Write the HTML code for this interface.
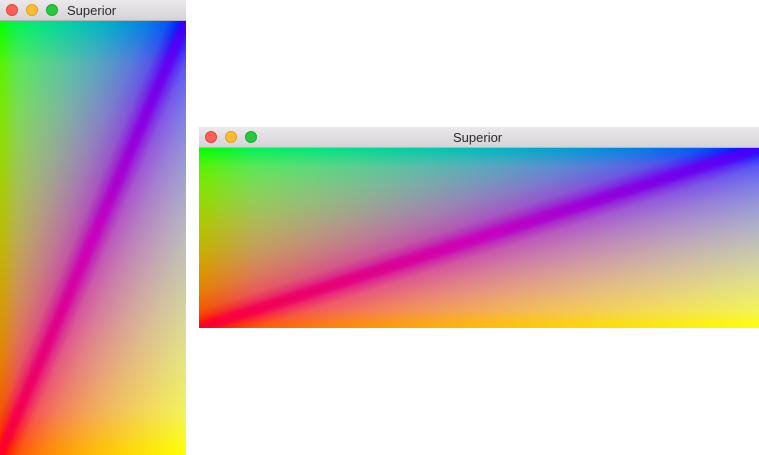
<!DOCTYPE html>
<html><head><style>
body{margin:0;width:759px;height:455px;background:#fff;position:relative;overflow:hidden;font-family:"Liberation Sans",sans-serif}
.win{position:absolute}
.tb{position:absolute;left:0;right:0;top:0;background:linear-gradient(#ebe9eb,#d5d3d5);border-bottom:1px solid #b4b4b4;box-sizing:border-box}
.dot{position:absolute;width:12px;height:12px;border-radius:50%;top:4px}
.r{background:#fc5f57;border:0.5px solid #e2463f;box-sizing:border-box}
.y{background:#fdbc2e;border:0.5px solid #e0a028;box-sizing:border-box}
.g{background:#28c840;border:0.5px solid #1eaa30;box-sizing:border-box}
.t{position:absolute;top:3px;font-size:13px;color:#2b2b2b}
svg.c{position:absolute;left:0;display:block}
.scr{mix-blend-mode:screen}
</style></head><body>
<svg width="0" height="0" style="position:absolute">
<defs>
<linearGradient id="wg" gradientUnits="userSpaceOnUse" x1="0" y1="0" x2="50" y2="50">
<stop offset="0" stop-color="rgb(0,255,0)"/><stop offset=".1" stop-color="rgb(0,243,0)"/><stop offset=".2" stop-color="rgb(0,231,0)"/><stop offset=".3" stop-color="rgb(0,218,0)"/><stop offset=".4" stop-color="rgb(0,203,0)"/><stop offset=".5" stop-color="rgb(0,188,0)"/><stop offset=".6" stop-color="rgb(0,170,0)"/><stop offset=".7" stop-color="rgb(0,149,0)"/><stop offset=".8" stop-color="rgb(0,124,0)"/><stop offset=".9" stop-color="rgb(0,89,0)"/><stop offset="1" stop-color="rgb(0,0,0)"/></linearGradient>
<linearGradient id="wr" gradientUnits="userSpaceOnUse" x1="0" y1="0" x2="0" y2="100">
<stop offset="0" stop-color="rgb(0,0,0)"/><stop offset=".1" stop-color="rgb(89,0,0)"/><stop offset=".2" stop-color="rgb(124,0,0)"/><stop offset=".3" stop-color="rgb(149,0,0)"/><stop offset=".4" stop-color="rgb(170,0,0)"/><stop offset=".5" stop-color="rgb(188,0,0)"/><stop offset=".6" stop-color="rgb(203,0,0)"/><stop offset=".7" stop-color="rgb(218,0,0)"/><stop offset=".8" stop-color="rgb(231,0,0)"/><stop offset=".9" stop-color="rgb(243,0,0)"/><stop offset="1" stop-color="rgb(255,0,0)"/></linearGradient>
<linearGradient id="wb" gradientUnits="userSpaceOnUse" x1="0" y1="0" x2="100" y2="0">
<stop offset="0" stop-color="rgb(0,0,0)"/><stop offset=".1" stop-color="rgb(0,0,89)"/><stop offset=".2" stop-color="rgb(0,0,124)"/><stop offset=".3" stop-color="rgb(0,0,149)"/><stop offset=".4" stop-color="rgb(0,0,170)"/><stop offset=".5" stop-color="rgb(0,0,188)"/><stop offset=".6" stop-color="rgb(0,0,203)"/><stop offset=".7" stop-color="rgb(0,0,218)"/><stop offset=".8" stop-color="rgb(0,0,231)"/><stop offset=".9" stop-color="rgb(0,0,243)"/><stop offset="1" stop-color="rgb(0,0,255)"/></linearGradient>
<linearGradient id="br" gradientUnits="userSpaceOnUse" x1="0" y1="0" x2="0" y2="100">
<stop offset="0" stop-color="rgb(0,0,255)"/><stop offset=".1" stop-color="rgb(89,0,243)"/><stop offset=".2" stop-color="rgb(124,0,231)"/><stop offset=".3" stop-color="rgb(149,0,218)"/><stop offset=".4" stop-color="rgb(170,0,203)"/><stop offset=".5" stop-color="rgb(188,0,188)"/><stop offset=".6" stop-color="rgb(203,0,170)"/><stop offset=".7" stop-color="rgb(218,0,149)"/><stop offset=".8" stop-color="rgb(231,0,124)"/><stop offset=".9" stop-color="rgb(243,0,89)"/><stop offset="1" stop-color="rgb(255,0,0)"/></linearGradient>
<linearGradient id="wy" gradientUnits="userSpaceOnUse" x1="50" y1="50" x2="100" y2="100">
<stop offset="0" stop-color="rgb(0,0,0)"/><stop offset=".1" stop-color="rgb(0,89,0)"/><stop offset=".2" stop-color="rgb(0,124,0)"/><stop offset=".3" stop-color="rgb(0,149,0)"/><stop offset=".4" stop-color="rgb(0,170,0)"/><stop offset=".5" stop-color="rgb(0,188,0)"/><stop offset=".6" stop-color="rgb(0,203,0)"/><stop offset=".7" stop-color="rgb(0,218,0)"/><stop offset=".8" stop-color="rgb(0,231,0)"/><stop offset=".9" stop-color="rgb(0,243,0)"/><stop offset="1" stop-color="rgb(0,255,0)"/></linearGradient>
<filter id="bl" x="-20%" y="-20%" width="140%" height="140%"><feGaussianBlur stdDeviation="1.5"/></filter>
</defs></svg>

<div class="win" style="left:0;top:0;width:186px;height:455px">
<div class="tb" style="height:21px"></div>
<div class="dot r" style="left:6px"></div><div class="dot y" style="left:26px"></div><div class="dot g" style="left:46px"></div>
<div class="t" style="left:67px">Superior</div>
<svg class="c" style="top:21px" width="186" height="434" viewBox="0 0 100 100" preserveAspectRatio="none">
<g style="isolation:isolate">
<polygon points="0,0 100,0 0,100" fill="url(#wg)"/>
<polygon class="scr" points="0,0 100,0 0,100" fill="url(#wr)"/>
<polygon class="scr" points="0,0 100,0 0,100" fill="url(#wb)"/>
</g>
<g style="isolation:isolate">
<polygon points="100,0 100,100 0,100" fill="url(#br)"/>
<polygon class="scr" points="100,0 100,100 0,100" fill="url(#wy)"/>
</g>
</svg>
<svg class="c" style="top:21px" width="186" height="434">
<defs><linearGradient id="ln1" gradientUnits="userSpaceOnUse" x1="0" y1="434" x2="186" y2="0"><stop offset="0" stop-color="#ff0030"/><stop offset=".5" stop-color="#d000c0"/><stop offset="1" stop-color="#5000ff"/></linearGradient></defs>
<line x1="-5" y1="445" x2="191" y2="-11" stroke="url(#ln1)" stroke-width="9" opacity="0.75" filter="url(#bl)"/>
</svg>
</div>

<div class="win" style="left:199px;top:127px;width:560px;height:201px">
<div class="tb" style="height:21px"></div>
<div class="dot r" style="left:6px"></div><div class="dot y" style="left:26px"></div><div class="dot g" style="left:46px"></div>
<div class="t" style="left:254px">Superior</div>
<svg class="c" style="top:21px" width="560" height="180" viewBox="0 0 100 100" preserveAspectRatio="none">
<g style="isolation:isolate">
<polygon points="0,0 100,0 0,100" fill="url(#wg)"/>
<polygon class="scr" points="0,0 100,0 0,100" fill="url(#wr)"/>
<polygon class="scr" points="0,0 100,0 0,100" fill="url(#wb)"/>
</g>
<g style="isolation:isolate">
<polygon points="100,0 100,100 0,100" fill="url(#br)"/>
<polygon class="scr" points="100,0 100,100 0,100" fill="url(#wy)"/>
</g>
</svg>
<svg class="c" style="top:21px" width="560" height="180">
<defs><linearGradient id="ln2" gradientUnits="userSpaceOnUse" x1="0" y1="180" x2="560" y2="0"><stop offset="0" stop-color="#ff0030"/><stop offset=".5" stop-color="#d000c0"/><stop offset="1" stop-color="#5000ff"/></linearGradient></defs>
<line x1="-10" y1="183" x2="570" y2="-3" stroke="url(#ln2)" stroke-width="10" opacity="0.75" filter="url(#bl)"/>
</svg>
</div>
</body></html>
